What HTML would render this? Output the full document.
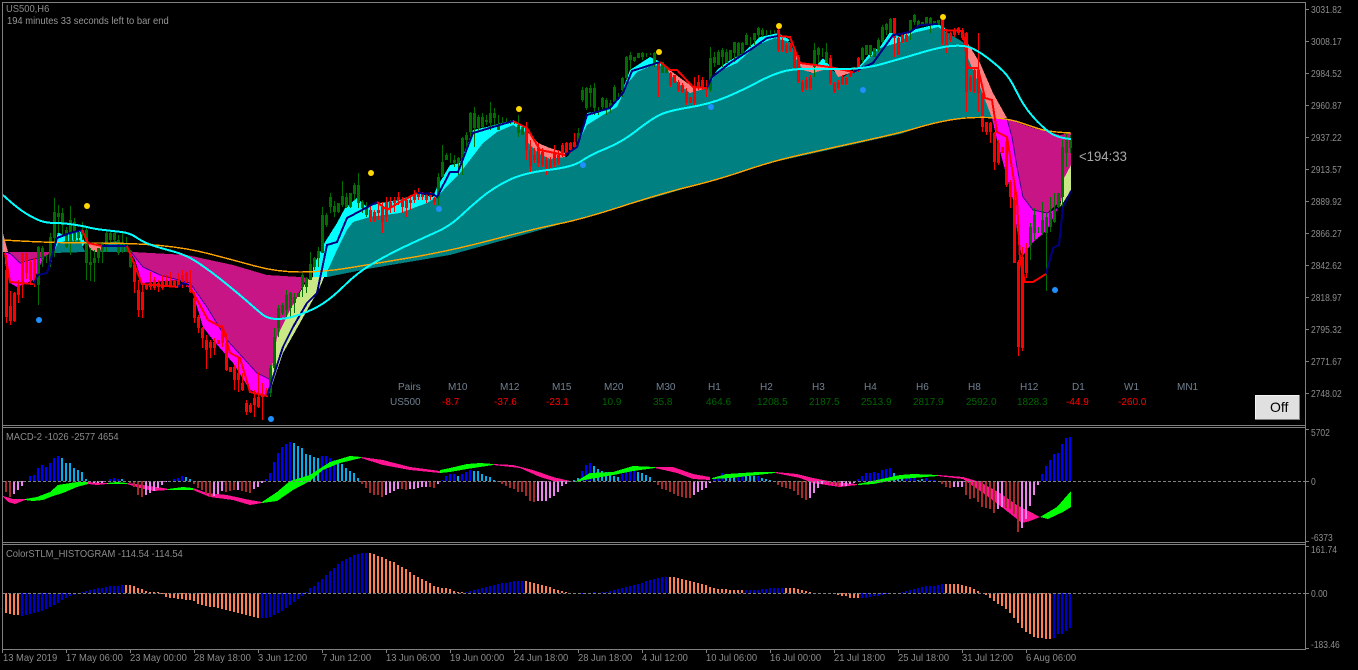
<!DOCTYPE html>
<html><head><meta charset="utf-8"><title>US500,H6</title>
<style>
html,body{margin:0;padding:0;background:#000;width:1358px;height:670px;overflow:hidden}
svg{display:block}
text{font-family:"Liberation Sans",sans-serif;font-size:10px;fill:#8c8c8c;transform-box:fill-box;transform-origin:0 0}
.a text{transform:scaleX(.85)}
.t text{transform:scaleX(.94)}
.p text{fill:#708090}
.r{fill:#f00}
.g{fill:#006400}
.c{shape-rendering:crispEdges;fill:none}
</style></head><body>
<svg width="1358" height="670" viewBox="0 0 1358 670" xmlns="http://www.w3.org/2000/svg">
<rect width="1358" height="670" fill="#000"/>
<!-- main fills -->
<g shape-rendering="crispEdges">
<polygon fill="#ff8080" points="3,233 8,252 3,252"/>
<polygon fill="#c71585" points="8,252 50,252 47,256 30,260 20,263 12,255"/>
<polygon fill="#f0f" points="5,252 12,255 20,263 30,260 47,256 43,258 37,273 33,280 17,287 10,283 5,263"/>
<polygon fill="#0ff" points="53,253 58,232 63,235 80,230 85,243 80,250 58,250"/>
<polygon fill="#008080" points="53,253 58,243 65,241 80,240 85,252"/>
<polygon fill="#ff8080" points="88,243 102,246 100,252 95,252 90,249"/>
<polygon fill="#008080" points="100,252 108,243 115,241 127,245 130,252"/>
<polygon fill="#c71585" points="128,248 133,252 187,255 233,265 267,275 300,277 307,278 290,310 277,337 270,380 257,373 227,340 207,307 190,283 160,275 143,267"/>
<polygon fill="#f0f" points="128,248 143,267 160,275 190,283 207,307 227,340 257,373 270,380 268,397 250,390 233,363 213,340 203,327 192,290 180,280 142,283 135,260"/>
<polygon fill="#cbe886" points="270,380 277,337 290,310 307,280 311,278 325,272 325,275 320,287 300,323 283,353 272,385"/>
<polygon fill="#0ff" points="313,277 313,267 325,242 337,223 345,208 357,198 367,207 380,203 400,200 417,193 433,197 437,187 450,165 460,163 473,130 487,127 513,120 527,128 527,135 450,190 340,270 327,277"/>
<polygon fill="#0ff" points="578,143 587,113 607,110 620,97 630,70 650,57 663,63 667,70 640,100 590,130"/>
<polygon fill="#0ff" points="707,88 717,70 727,62 743,53 760,37 778,33 790,40 760,60 720,90"/>
<polygon fill="#0ff" points="813,70 823,58 830,66 820,80"/>
<polygon fill="#0ff" points="858,68 870,53 880,47 890,32 900,37 912,30 938,24 945,28 945,45 880,70"/>
<polygon fill="#008080" points="327,272 337,250 347,230 353,222 370,217 400,213 427,203 437,197 450,183 460,173 483,143 497,132 513,125 527,133 537,143 553,153 567,157 578,143 587,125 603,115 617,107 628,83 637,72 653,65 667,67 680,83 690,93 707,88 717,72 737,63 757,45 775,38 790,42 797,57 810,73 827,67 843,77 860,67 880,48 900,42 913,33 938,27 963,42 968,58 980,87 992,117 967,117 933,123 900,134 770,163 663,195 533,232 450,255 367,269 327,277"/>
<polygon fill="#ff8080" points="527,132 538,143 550,148 565,153 565,157 550,159 538,153 528,143"/>
<polygon fill="#ff8080" points="667,68 683,80 693,87 707,87 707,88 690,93 680,85 670,75"/>
<polygon fill="#ff8080" points="793,42 800,62 813,65 830,68 813,73 803,70 795,57"/>
<polygon fill="#ff8080" points="833,68 853,72 838,77"/>
<polygon fill="#ff8080" points="967,42 980,63 993,93 1007,118 992,118 980,87 968,58"/>
<polygon fill="#c71585" points="1007,119 1033,128 1060,135 1071,133 1071,165 1062,200 1047,213 1033,210 1023,197 1017,167 1012,137"/>
<polygon fill="#f0f" points="992,118 1007,119 1012,137 1017,167 1023,197 1033,210 1047,213 1058,208 1047,230 1032,243 1022,257 1017,230 1013,200 997,140"/>
<polygon fill="#cbe886" points="1071,165 1071,190 1063,203 1060,207 1062,197 1063,180"/>
</g>
<!-- thin boundary -->
<g class="c" stroke="#400080" stroke-width="1">
<polyline points="128,248 143,267 160,275 190,283 207,307 227,340 257,373 269,379"/>
<polyline points="1007,119 1012,137 1017,167 1023,197 1033,210 1047,213 1058,208"/>
<polyline points="8,252 12,255 20,263 30,260 47,256"/>
</g>
<!-- candles -->
<g transform="translate(.5,0)" class="c">
<path stroke="#006e00" stroke-width="1" d="M38 246V305M42 246V267M46 255V263M50 233V267M54 198V257M58 205V233M62 208V235M66 227V248M70 206V255M74 218V243M78 230V242M82 222V240M86 227V280M90 248V281M94 250V282M98 248V263M102 242V263M106 232V252M110 232V243M114 232V243M118 235V255M122 233V253M126 237V252M130 250V268M270 365V397M274 328V370M278 305V337M282 303V315M286 290V317M290 292V317M294 293V313M298 293V297M302 273V297M306 277V293M310 252V280M314 257V270M318 247V267M322 207V253M326 213V227M330 193V213M334 201V217M338 203V213M342 181V207M346 193V208M350 193V208M354 183V200M358 173V208M362 200V213M366 202V217M438 173V205M442 145V177M446 153V160M450 153V163M454 155V167M458 157V175M462 137V175M466 132V150M470 112V138M474 107V147M478 115V130M482 113V128M486 115V125M490 102V130M494 108V125M498 115V130M502 117V125M506 118V123M510 120V124M514 121V124M518 115V137M522 127V135M578 128V142M582 87V102M586 87V110M590 85V107M594 83V115M598 107V115M602 97V110M606 98V115M610 100V113M614 85V103M618 93V100M622 77V97M626 56V80M630 52V70M634 57V62M638 53V58M642 52V60M646 53V57M650 53V55M654 52V67M662 62V73M666 67V73M710 47V92M714 52V67M718 50V65M722 48V67M726 49V63M730 50V60M734 42V62M738 42V58M742 42V55M746 33V45M750 37V47M754 33V45M758 27V38M762 28V37M766 30V35M770 30V35M774 30V33M814 43V77M818 47V63M822 48V57M826 43V60M862 47V63M866 45V55M870 45V57M874 48V57M878 38V52M882 25V43M886 23V35M890 18V33M910 20V40M914 14V25M918 20V26M922 22V25M926 17V25M930 17V33M934 21V24M938 20V25M1030 223V260M1034 208V240M1038 227V233M1042 202V235M1046 213V291M1050 197V232M1054 193V223M1058 193V208M1062 140V207M1066 132V167M1070 135V153"/>
<path stroke="#006e00" stroke-width="3" d="M38 247V285M42 248V260M50 237V262M54 212V238M58 213V217M62 213V225M66 230V247M70 220V242M74 222V240M78 232V238M82 230V233M86 230V263M90 262V265M94 258V263M98 248V258M102 243V250M106 233V245M110 233V240M114 233V240M118 240V253M122 247V252M126 247V252M130 255V267M270 368V393M274 337V368M278 308V328M282 305V313M286 295V310M290 293V308M294 297V303M298 293V297M302 275V287M306 278V287M310 264V280M314 258V267M318 251V258M322 215V253M326 215V225M330 197V207M334 206V212M338 203V212M342 196V205M346 197V207M350 193V207M354 185V194M358 185V203M362 202V208M366 208V215M438 177V197M442 162V177M446 155V160M454 160V163M458 158V163M462 138V158M466 135V140M470 113V132M474 113V128M478 117V128M482 117V127M486 120V122M490 113V123M494 113V118M498 125V130M518 125V133M522 127V135M578 133V142M582 90V100M586 88V108M590 88V93M594 88V108M602 98V107M606 100V108M610 103V107M614 87V102M622 78V90M626 57V78M630 55V60M634 57V61M638 53V58M642 53V57M654 53V63M662 62V73M666 67V73M710 58V90M714 57V63M718 52V65M722 50V57M726 52V63M730 50V60M734 42V53M738 43V57M742 43V53M746 35V45M754 33V40M758 28V35M762 30V35M814 50V67M818 48V55M826 52V63M862 48V60M866 45V55M870 45V55M874 48V57M878 40V50M882 27V42M886 24V30M890 19V33M910 20V32M914 15V22M918 21V26M922 22V25M926 17V25M930 18V24M934 21V24M938 20V25M1030 227V245M1034 215V233M1042 220V233M1046 217V233M1050 213V227M1054 210V222M1058 193V207M1062 147V197M1066 137V153M1070 140V148"/>
<path stroke="#f00" stroke-width="1" d="M6 255V323M10 291V325M14 292V322M18 280V303M22 253V298M26 253V279M30 260V285M34 258V287M134 262V293M138 280V317M142 283V318M146 285V290M150 272V290M154 277V290M158 280V292M162 275V290M166 275V287M170 272V287M174 280V287M178 273V287M182 270V288M186 272V287M190 270V293M194 292V323M198 315V333M202 327V348M206 335V369M210 340V358M214 338V355M218 340V344M222 325V347M226 333V371M230 367V372M234 365V390M238 357V392M242 373V391M246 400V415M250 403V413M254 390V417M258 372V408M262 383V420M266 388V397M370 205V222M374 210V222M378 202V220M382 202V233M386 197V222M390 197V213M394 197V212M398 192V205M402 197V213M406 198V217M410 195V210M414 190V203M418 188V200M422 192V200M426 193V203M430 192V200M434 197V205M526 122V160M530 140V172M534 148V163M538 143V167M542 148V167M546 157V175M550 157V168M554 145V167M558 150V165M562 143V157M566 142V155M570 142V153M574 133V148M658 63V97M670 72V87M674 75V83M678 80V92M682 83V93M686 88V105M690 97V103M694 77V105M698 75V90M702 77V90M706 80V97M778 28V52M782 38V52M786 43V53M790 43V52M794 48V65M798 55V83M802 80V92M806 77V90M810 75V90M830 55V85M834 82V93M838 80V90M842 75V85M846 77V85M850 72V77M854 67V73M858 57V72M894 18V57M898 37V55M902 33V43M906 33V42M942 18V45M946 30V53M950 32V42M954 28V37M958 27V35M962 28V40M966 32V112M970 75V92M974 68V93M978 33V112M982 93V132M986 122V135M990 122V143M994 132V170M998 140V165M1002 147V153M1006 137V187M1010 180V208M1014 182V263M1018 260V356M1022 247V351M1026 243V278"/>
<path stroke="#f00" stroke-width="3" d="M6 270V317M10 306V321M14 293V321M18 285V295M22 253V285M26 253V273M30 262V280M34 260V282M134 265V282M138 290V310M142 292V310M146 285V289M150 283V287M154 280V288M158 283V287M162 282V288M166 280V286M170 280V286M174 281V286M178 280V286M182 275V282M186 273V282M190 283V292M194 298V318M198 317V328M202 328V338M206 340V350M210 342V348M214 342V348M218 340V344M222 328V343M226 343V370M230 367V372M234 367V380M238 373V380M242 383V390M246 403V412M250 405V412M254 398V405M258 397V407M262 395V397M266 390V396M370 210V218M374 212V220M378 210V213M382 207V222M386 202V217M390 202V208M394 200V203M398 197V200M402 200V207M406 200V208M410 200V203M414 195V200M418 193V197M422 193V197M426 195V200M430 193V197M434 198V202M526 128V150M530 150V167M534 155V160M538 148V163M542 152V165M546 160V168M550 160V168M554 153V165M558 155V163M562 145V153M566 143V153M570 143V150M574 142V147M658 63V70M670 73V85M674 75V83M678 82V90M682 85V92M686 92V103M690 97V103M694 88V103M698 82V87M702 80V88M706 87V90M778 30V50M782 40V50M786 45V52M790 45V50M794 50V68M798 57V82M802 82V90M806 80V88M810 77V88M830 58V83M834 83V92M838 82V88M842 77V84M846 78V84M850 73V76M854 68V72M858 58V68M894 18V38M898 38V55M902 35V42M906 35V42M942 20V43M946 33V45M950 33V40M954 30V35M958 28V33M962 30V38M966 33V92M970 77V90M974 70V92M978 70V93M982 95V127M986 122V132M990 123V132M994 133V162M998 143V163M1002 147V153M1006 142V185M1010 182V197M1014 200V263M1018 262V347M1022 257V348M1026 248V273"/>
</g>
<!-- moving averages -->
<g class="c">
<path stroke="#ffa500" stroke-width="1.4" d="M3 240Q50 243 91.5 243Q133 243 160 245.5Q187 248 210 254Q233 260 255 266Q277 272 300 272Q323 272 345 268.5Q367 265 408.5 258Q450 251 491.5 240Q533 229 558 224Q583 219 623 206Q663 193 690 186.5Q717 180 743.5 171Q770 162 793.5 156.5Q817 151 858.5 142Q900 133 916.5 128Q933 123 950 120Q967 117 987 117.5Q1007 118 1020 122.5Q1033 127 1041.5 129.5Q1050 132 1071 133"/>
<g stroke="#000080" stroke-width="2">
<polyline points="33,285 38,275 47,273 57,238 70,233 82,230"/>
<polyline points="102,246 127,246"/>
<polyline points="178,287 183,283 189,285"/>
<polyline points="267,396 283,347 293,327 307,303 317,293 327,245 337,242 347,218 377,202"/>
<polyline points="417,193 433,194 437,197 450,172 458,172 473,133 513,121"/>
<polyline points="565,155 577,147 587,115 610,108 623,93 632,71 660,62"/>
<polyline points="707,88 712,77 730,63 750,50 767,38 778,36"/>
<polyline points="853,72 873,63 893,35 900,34 910,32 920,25 938,24"/>
<polyline points="1046,274 1053,248 1059,245 1063,207 1071,191"/>
</g>
<g stroke="#f00" stroke-width="2">
<polyline points="5,253 10,282 33,284"/>
<polyline points="82,230 88,243 102,246"/>
<polyline points="127,246 142,284 178,287"/>
<polyline points="189,285 208,320 223,328 230,353 240,358 250,392 267,396"/>
<polyline points="377,202 387,210 400,202 417,193"/>
<polyline points="513,121 527,128 540,150 565,155"/>
<polyline points="660,62 670,70 677,70 693,87 707,88"/>
<polyline points="778,36 790,37 800,63 830,67 853,72"/>
<polyline points="942,30 963,31 968,68 978,68 985,98 992,100 997,132 1007,137 1017,200 1020,260 1025,282 1033,282 1046,274"/>
</g>
<path stroke="#0ff" stroke-width="2" d="M3 195Q17 208 26 213.5Q35 219 41 221Q47 223 55 223Q63 223 73 224.5Q83 226 89 227.5Q95 229 104 230Q113 231 121.5 232Q130 233 136.5 237.5Q143 242 151.5 245Q160 248 173.5 251.5Q187 255 200 264Q213 273 226.5 284Q240 295 248.5 302.5Q257 310 262.5 314.5Q268 319 277.5 319Q287 319 300 314.5Q313 310 323 303.5Q333 297 345 285Q357 273 372 264Q387 255 405 246.5Q423 238 436.5 232Q450 226 460 216.5Q470 207 481.5 197.5Q493 188 508 180.5Q523 173 548 170Q573 167 581.5 161Q590 155 606 148.5Q622 142 636 131Q650 120 658.5 115.5Q667 111 688.5 107.5Q710 104 726.5 97Q743 90 758 82Q773 74 785 71Q797 68 828.5 69Q860 70 880 64.5Q900 59 920 53Q940 47 951.5 46Q963 45 970 47.5Q977 50 987 57.5Q997 65 1003.5 71.5Q1010 78 1016.5 91.5Q1023 105 1031.5 115Q1040 125 1048.5 131.5Q1057 138 1071 139"/>
</g>
<!-- dots -->
<g fill="#ffd700"><circle cx="87" cy="206" r="3"/><circle cx="371" cy="173" r="3"/><circle cx="519" cy="109" r="3"/><circle cx="659" cy="52" r="3"/><circle cx="779" cy="26" r="3"/><circle cx="943" cy="17" r="3"/></g>
<g fill="#1e90ff"><circle cx="39" cy="320" r="3"/><circle cx="271" cy="419" r="3"/><circle cx="439" cy="209" r="3"/><circle cx="583" cy="165" r="3"/><circle cx="711" cy="107" r="3"/><circle cx="863" cy="90" r="3"/><circle cx="1055" cy="290" r="3"/></g>
<!-- MACD histogram -->
<g class="c" stroke-width="2">
<path stroke="#0000ff" d="M30 481v-5M34 481v-6M38 481v-13M42 481v-16M46 481v-14M50 481v-18M54 481v-23M58 481v-25M110 481v-2M114 481v-3M118 481v-2M174 481v-2M178 481v-3M182 481v-5M266 481v-2M270 481v-8M274 481v-19M278 481v-28M282 481v-34M286 481v-37M290 481v-39M322 481v-25M326 481v-25M330 481v-23M334 481v-21M442 481v-1M446 481v-5M450 481v-7M454 481v-7M462 481v-7M466 481v-9M470 481v-11M582 481v-10M586 481v-16M590 481v-18M622 481v-7M626 481v-9M630 481v-10M634 481v-10M714 481v-2M718 481v-5M722 481v-8M738 481v-8M742 481v-8M758 481v-5M858 481v-2M862 481v-5M866 481v-8M870 481v-8M874 481v-9M878 481v-8M882 481v-11M886 481v-12M890 481v-13M906 481v-3M910 481v-3M914 481v-3M926 481v-3M930 481v-1M934 481v-1M1042 481v-7M1046 481v-15M1050 481v-21M1054 481v-27M1058 481v-28M1062 481v-37M1066 481v-43M1070 481v-44"/>
<path stroke="#00aeef" d="M62 481v-23M66 481v-18M70 481v-18M74 481v-13M78 481v-11M82 481v-9M86 481v-2M122 481v-2M186 481v-4M190 481v-2M294 481v-38M298 481v-35M302 481v-33M306 481v-27M310 481v-26M314 481v-24M318 481v-23M338 481v-21M342 481v-17M346 481v-13M350 481v-10M354 481v-8M358 481v-3M458 481v-5M474 481v-10M478 481v-10M482 481v-7M486 481v-5M490 481v-4M494 481v-1M574 481v-1M578 481v-3M594 481v-15M598 481v-12M602 481v-10M606 481v-9M610 481v-7M614 481v-5M618 481v-4M638 481v-9M642 481v-8M646 481v-6M650 481v-4M726 481v-7M730 481v-6M734 481v-7M746 481v-6M750 481v-5M754 481v-5M762 481v-3M766 481v-2M770 481v-1M894 481v-8M898 481v-4M902 481v-3M918 481v-1M922 481v-2"/>
<polygon stroke="none" fill="#ff1493" points="3,496 13,499 25,499 25,500 15,504 8,502 3,497"/>
<polygon stroke="none" fill="#ff1493" points="88,482 100,483 107,483 107,484 97,485 88,484"/>
<polygon stroke="none" fill="#ff1493" points="127,483 143,485 163,488 168,489 168,490 153,491 140,488 127,484"/>
<polygon stroke="none" fill="#ff1493" points="193,488 207,493 227,495 250,500 262,502 262,503 250,505 233,500 210,497 193,490"/>
<polygon stroke="none" fill="#ff1493" points="361,457 383,460 410,467 440,471 440,473 410,470 383,465 361,458"/>
<polygon stroke="none" fill="#ff1493" points="493,464 513,465 533,470 553,477 570,481 573,482 557,482 540,477 520,468 493,465"/>
<polygon stroke="none" fill="#ff1493" points="655,467 673,467 693,474 710,477 710,480 693,479 677,473 655,468"/>
<polygon stroke="none" fill="#ff1493" points="775,472 797,474 813,478 833,482 857,484 857,485 840,487 813,483 800,478 775,473"/>
<polygon stroke="none" fill="#ff1493" points="938,475 963,477 980,482 1000,493 1017,505 1040,517 1030,521 1022,523 1003,508 983,493 963,479 938,476"/>
<path stroke="#a52a2a" d="M6 481v11M10 481v16M90 481v1M130 481v2M134 481v6M138 481v14M142 481v16M194 481v3M198 481v7M202 481v9M206 481v13M210 481v16M226 481v11M230 481v10M234 481v9M242 481v10M246 481v11M250 481v12M362 481v3M366 481v7M370 481v12M374 481v14M378 481v14M382 481v16M402 481v8M406 481v9M430 481v6M434 481v7M498 481v1M502 481v3M506 481v5M510 481v7M514 481v8M518 481v11M522 481v11M526 481v15M530 481v20M534 481v21M658 481v4M662 481v8M666 481v9M670 481v11M674 481v13M678 481v15M682 481v16M686 481v17M690 481v17M778 481v4M782 481v6M786 481v7M790 481v8M794 481v10M798 481v14M802 481v17M806 481v19M830 481v3M834 481v4M838 481v5M942 481v3M946 481v6M950 481v7M966 481v14M970 481v18M974 481v17M978 481v21M982 481v26M986 481v27M990 481v28M994 481v32M1006 481v27M1010 481v28M1014 481v33M1018 481v51"/>
<path stroke="#ee82ee" d="M14 481v13M18 481v9M22 481v5M94 481v2M98 481v2M102 481v2M146 481v14M150 481v12M154 481v10M158 481v7M162 481v4M166 481v1M214 481v15M218 481v13M222 481v10M238 481v9M254 481v8M258 481v6M262 481v2M386 481v14M390 481v12M394 481v10M398 481v8M410 481v8M414 481v8M418 481v7M422 481v6M426 481v6M438 481v3M538 481v20M542 481v20M546 481v20M550 481v17M554 481v15M558 481v11M562 481v5M566 481v3M694 481v14M698 481v11M702 481v9M706 481v7M710 481v2M810 481v17M814 481v12M818 481v7M822 481v3M842 481v5M846 481v5M850 481v3M854 481v2M954 481v6M958 481v6M962 481v6M998 481v28M1002 481v26M1022 481v47M1026 481v38M1030 481v25M1034 481v14M1038 481v4"/>
<g stroke="none" fill="#0f0">
<polygon points="25,499 37,497 50,492 58,485 77,482 88,482 88,484 77,487 63,493 53,496 43,500 33,501 25,500"/>
<polygon points="107,483 117,482 127,483 127,484 117,484 107,484"/>
<polygon points="168,489 183,487 193,488 193,490 183,490 168,490"/>
<polygon points="262,502 277,492 290,481 310,475 330,462 350,456 361,457 361,458 340,463 323,470 310,481 293,490 277,501 262,503"/>
<polygon points="440,470 450,468 467,464 480,463 493,464 493,465 480,467 467,469 450,472 440,473"/>
<polygon points="575,482 590,473 613,472 633,466 655,467 655,468 633,471 613,475 590,479 575,482"/>
<polygon points="712,478 727,474 757,472 775,472 775,473 757,475 730,478 712,479"/>
<polygon points="858,484 877,480 900,475 913,474 938,475 938,476 913,478 900,479 873,484 858,485"/>
<polygon points="1040,517 1057,507 1071,491 1071,507 1063,512 1048,519"/>
</g>
</g>
<!-- STLM histogram -->
<g class="c" stroke-width="2">
<path stroke="#0000cd" d="M22 593v23M26 593v22M30 593v21M34 593v20M38 593v19M42 593v18M46 593v16M50 593v14M54 593v12M58 593v10M62 593v7M66 593v5M70 593v3M74 593v2M78 593v1M82 593v-1M86 593v-2M90 593v-3M94 593v-4M98 593v-5M102 593v-5M106 593v-6M110 593v-7M114 593v-7M118 593v-7M122 593v-8M262 593v25M266 593v25M270 593v24M274 593v22M278 593v20M282 593v18M286 593v15M290 593v12M294 593v9M298 593v6M302 593v3M306 593v-1M310 593v-5M314 593v-7M318 593v-11M322 593v-14M326 593v-18M330 593v-22M334 593v-25M338 593v-29M342 593v-32M346 593v-34M350 593v-36M354 593v-38M358 593v-39M362 593v-40M366 593v-40M466 593v-1M470 593v-2M474 593v-3M478 593v-4M482 593v-5M486 593v-6M490 593v-7M494 593v-8M498 593v-9M502 593v-10M506 593v-10M510 593v-11M514 593v-12M518 593v-12M522 593v-12M582 593v1M594 593v-1M602 593v-1M606 593v-1M610 593v-2M614 593v-3M618 593v-4M622 593v-5M626 593v-6M630 593v-7M634 593v-8M638 593v-9M642 593v-10M646 593v-12M650 593v-13M654 593v-14M658 593v-15M662 593v-16M666 593v-16M746 593v-3M750 593v-3M754 593v-3M758 593v-3M762 593v-4M766 593v-4M770 593v-5M774 593v-5M778 593v-5M782 593v-5M862 593v5M866 593v5M870 593v4M874 593v3M878 593v3M882 593v2M886 593v1M902 593v-1M906 593v-2M910 593v-3M914 593v-4M918 593v-5M922 593v-6M926 593v-7M930 593v-7M934 593v-7M938 593v-8M942 593v-9M1054 593v45M1058 593v41M1062 593v41M1066 593v38M1070 593v35"/>
<path stroke="#ff7f50" d="M6 593v20M10 593v21M14 593v22M18 593v22M126 593v-8M130 593v-8M134 593v-7M138 593v-5M142 593v-4M146 593v-2M150 593v-1M154 593v-1M158 593v-1M162 593v1M166 593v4M170 593v5M174 593v5M178 593v6M182 593v6M186 593v7M190 593v7M194 593v8M198 593v11M202 593v12M206 593v13M210 593v14M214 593v14M218 593v15M222 593v16M226 593v17M230 593v18M234 593v19M238 593v20M242 593v21M246 593v22M250 593v23M254 593v24M258 593v25M370 593v-40M374 593v-39M378 593v-37M382 593v-36M386 593v-34M390 593v-32M394 593v-31M398 593v-28M402 593v-26M406 593v-24M410 593v-21M414 593v-18M418 593v-16M422 593v-14M426 593v-12M430 593v-10M434 593v-7M438 593v-6M442 593v-5M446 593v-5M450 593v-4M454 593v-2M458 593v-1M462 593v-1M526 593v-12M530 593v-11M534 593v-10M538 593v-9M542 593v-8M546 593v-7M550 593v-6M554 593v-4M558 593v-3M562 593v-2M566 593v-1M670 593v-16M674 593v-16M678 593v-15M682 593v-14M686 593v-13M690 593v-12M694 593v-11M698 593v-10M702 593v-9M706 593v-8M710 593v-6M714 593v-5M718 593v-4M722 593v-4M726 593v-4M730 593v-3M734 593v-3M738 593v-3M742 593v-3M786 593v-5M790 593v-5M794 593v-5M798 593v-4M802 593v-3M806 593v-2M810 593v-1M834 593v1M838 593v2M842 593v3M846 593v3M850 593v5M854 593v5M858 593v5M946 593v-9M950 593v-9M954 593v-9M958 593v-9M962 593v-8M966 593v-7M970 593v-6M974 593v-4M978 593v-2M986 593v2M990 593v5M994 593v8M998 593v11M1002 593v13M1006 593v16M1010 593v20M1014 593v25M1018 593v30M1022 593v35M1026 593v39M1030 593v41M1034 593v44M1038 593v45M1042 593v45M1046 593v46M1050 593v46"/>
</g>
<!-- frames -->
<g class="c" stroke="#808080" stroke-width="1">
<path d="M2.5 2.5H1305.5V649.5H2.5ZM2 425.5H1305M2 427.5H1305M2 542.5H1305M2 544.5H1305"/>
<path stroke-dasharray="3 2" d="M3 481.5H1305M3 593.5H1305"/>
<path d="M1305 9.5h4M1305 41.5h4M1305 73.5h4M1305 105.5h4M1305 137.5h4M1305 169.5h4M1305 201.5h4M1305 233.5h4M1305 265.5h4M1305 297.5h4M1305 329.5h4M1305 361.5h4M1305 393.5h4M1305 429.5h4M1305 481.5h4M1305 541.5h4M1305 546.5h4M1305 593.5h4M1305 648.5h4"/>
<path d="M2.5 649v4M66.5 649v4M130.5 649v4M194.5 649v4M258.5 649v4M322.5 649v4M386.5 649v4M450.5 649v4M514.5 649v4M578.5 649v4M642.5 649v4M706.5 649v4M770.5 649v4M834.5 649v4M898.5 649v4M962.5 649v4M1026.5 649v4"/>
</g>
<!-- labels -->
<g class="t">
<text x="6" y="12">US500,H6</text>
<text x="7" y="24" style="fill:#969696">194 minutes 33 seconds left to bar end</text>
<text x="6" y="440">MACD-2 -1026 -2577 4654</text>
<text x="6" y="557">ColorSTLM_HISTOGRAM -114.54 -114.54</text>
<text x="1079" y="161" style="font-size:14px;fill:#a9a9a9">&lt;194:33</text>
</g>
<g class="a">
<text x="1311" y="13">3031.82</text><text x="1311" y="45">3008.17</text><text x="1311" y="77">2984.52</text><text x="1311" y="109">2960.87</text><text x="1311" y="141">2937.22</text><text x="1311" y="173">2913.57</text><text x="1311" y="205">2889.92</text><text x="1311" y="237">2866.27</text><text x="1311" y="269">2842.62</text><text x="1311" y="301">2818.97</text><text x="1311" y="333">2795.32</text><text x="1311" y="365">2771.67</text><text x="1311" y="397">2748.02</text>
<text x="1311" y="436">5702</text><text x="1311" y="485">0</text><text x="1311" y="541">-6373</text>
<text x="1311" y="553">161.74</text><text x="1311" y="597">0.00</text><text x="1311" y="648">-183.46</text>
</g>
<g class="t">
<text x="3" y="661">13 May 2019</text><text x="66" y="661">17 May 06:00</text><text x="130" y="661">23 May 00:00</text><text x="194" y="661">28 May 18:00</text><text x="258" y="661">3 Jun 12:00</text><text x="322" y="661">7 Jun 12:00</text><text x="386" y="661">13 Jun 06:00</text><text x="450" y="661">19 Jun 00:00</text><text x="514" y="661">24 Jun 18:00</text><text x="578" y="661">28 Jun 18:00</text><text x="642" y="661">4 Jul 12:00</text><text x="706" y="661">10 Jul 06:00</text><text x="770" y="661">16 Jul 00:00</text><text x="834" y="661">21 Jul 18:00</text><text x="898" y="661">25 Jul 18:00</text><text x="962" y="661">31 Jul 12:00</text><text x="1026" y="661">6 Aug 06:00</text>
</g>
<g class="p">
<text x="398" y="390">Pairs</text><text x="448" y="390">M10</text><text x="500" y="390">M12</text><text x="552" y="390">M15</text><text x="604" y="390">M20</text><text x="656" y="390">M30</text><text x="708" y="390">H1</text><text x="760" y="390">H2</text><text x="812" y="390">H3</text><text x="864" y="390">H4</text><text x="916" y="390">H6</text><text x="968" y="390">H8</text><text x="1020" y="390">H12</text><text x="1072" y="390">D1</text><text x="1124" y="390">W1</text><text x="1177" y="390">MN1</text>
<text x="390" y="405">US500</text>
</g>
<g>
<text x="442" y="405" class="r">-8.7</text><text x="494" y="405" class="r">-37.6</text><text x="546" y="405" class="r">-23.1</text><text x="602" y="405" class="g">10.9</text><text x="653" y="405" class="g">35.8</text><text x="706" y="405" class="g">464.6</text><text x="757" y="405" class="g">1208.5</text><text x="809" y="405" class="g">2187.5</text><text x="861" y="405" class="g">2513.9</text><text x="913" y="405" class="g">2817.9</text><text x="966" y="405" class="g">2592.0</text><text x="1017" y="405" class="g">1828.3</text><text x="1066" y="405" class="r">-44.9</text><text x="1118" y="405" class="r">-260.0</text>
</g>
<!-- Off button -->
<g shape-rendering="crispEdges">
<rect x="1255" y="395" width="45" height="25" fill="#808080"/>
<rect x="1255" y="395" width="44" height="24" fill="#f4f4f4"/>
<rect x="1256" y="396" width="43" height="23" fill="#e0e0e0"/>
</g>
<text x="1270" y="412" style="font-size:14px;fill:#000">Off</text>
</svg>
</body></html>
